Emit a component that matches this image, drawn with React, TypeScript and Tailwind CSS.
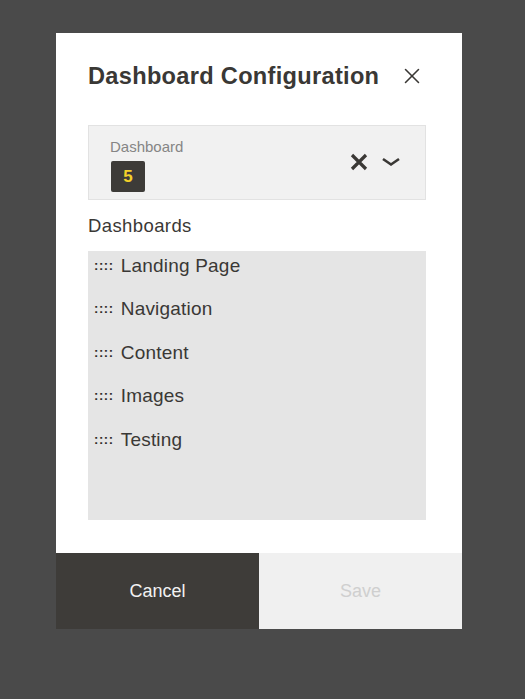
import { X } from 'lucide-react';

const dashboards = ['Landing Page', 'Navigation', 'Content', 'Images', 'Testing'];

export default function App() {
  return (
    <div
      className="min-h-[699px] w-full bg-[#4a4a4a] pt-[33px]"
      style={{ fontFamily: '"Liberation Sans", Arial, sans-serif' }}
    >
      <div className="ml-[56px] flex h-[596px] w-[406px] flex-col bg-white">
        <div className="flex flex-1 flex-col pl-8 pr-9 pt-[27px]">
          <div className="flex items-center justify-between">
            <h1 className="text-[23.6px] font-bold leading-[32px] tracking-[0.3px] text-[#3a3835]">
              Dashboard Configuration
            </h1>
            <button type="button" className="mr-[1px] text-[#3a3835]">
              <X size={26} strokeWidth={1.4} />
            </button>
          </div>

          <div className="mt-[33px] flex h-[75px] justify-between border border-[#e2e2e2] bg-[#f1f1f1] pl-[21px] pr-[24px] pt-[12px]">
            <div className="flex flex-col">
              <span className="text-[15px] leading-[18px] text-[#858585]">Dashboard</span>
              <span className="mt-[5px] ml-[1px] flex h-[31px] w-[34px] items-center justify-center rounded-[2px] bg-[#3d3b38] text-[17px] font-bold text-[#f4d12a]">
                5
              </span>
            </div>
            <div className="flex h-[48px] items-center gap-[13px] text-[#3a3835]">
              <svg width="18" height="18" viewBox="0 0 18 18">
                <path d="M2 2L16 16M16 2L2 16" stroke="currentColor" strokeWidth="3.2" />
              </svg>
              <svg width="20" height="10" viewBox="0 0 20 10">
                <path d="M2 2L10 7.5L18 2" stroke="currentColor" strokeWidth="2.6" fill="none" />
              </svg>
            </div>
          </div>

          <span className="mt-[15px] text-[18.5px] leading-[22px] tracking-[0.4px] text-[#3a3835]">
            Dashboards
          </span>

          <ul className="mt-[14px] h-[269px] bg-[#e5e5e5] pt-[4px]">
            {dashboards.map((name) => (
              <li
                key={name}
                className="flex h-[43.4px] items-start pl-[6px] text-[19px] leading-[22px] tracking-[0.2px] text-[#3a3835]"
              >
                <span className="mr-[7px] text-[13px] font-bold tracking-[0.6px] text-[#2f2d2a]">::::</span>
                {name}
              </li>
            ))}
          </ul>
        </div>

        <div className="flex h-[76px]">
          <button
            type="button"
            className="flex-1 bg-[#3e3c39] text-[18px] text-[#f2f2f2]"
          >
            Cancel
          </button>
          <button
            type="button"
            className="flex-1 bg-[#f0f0f0] text-[18px] text-[#cfcfcf]"
            disabled
          >
            Save
          </button>
        </div>
      </div>
    </div>
  );
}
